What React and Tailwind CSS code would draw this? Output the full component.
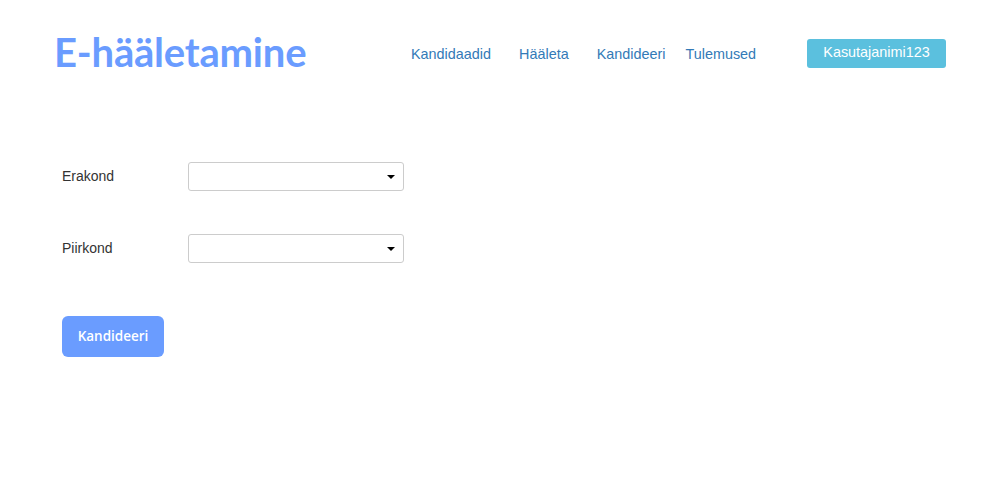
import React from 'react';

const navLinks = ['Kandidaadid', 'Hääleta', 'Kandideeri', 'Tulemused'];

const Caret = () => (
  <svg width="8" height="4" viewBox="0 0 8 4" className="absolute right-[9px] top-1/2 -translate-y-1/2 pointer-events-none">
    <path d="M0 0h8L4 4z" fill="#000" />
  </svg>
);

const SelectRow = ({ label }) => (
  <div className="flex items-center h-[29px]">
    <label className="w-[126px] text-[14px] text-[#333]">{label}</label>
    <div className="relative w-[216px] h-[29px]">
      <select className="w-full h-full appearance-none rounded-[3px] border border-[#ccc] bg-white px-2 text-[14px] outline-none">
        <option value=""></option>
      </select>
      <Caret />
    </div>
  </div>
);

export default function App() {
  return (
    <div className="w-[998px] h-[493px] bg-white font-['Liberation_Sans',Arial,sans-serif]">
      {/* header */}
      <div className="flex items-center h-[106px] pl-[54px] pr-[52px]">
        <h1 className="font-['Lato',sans-serif] font-bold text-[40px] text-[#6a9cff] tracking-[-0.2px] w-[357px] -mt-[2px]">
          E-hääletamine
        </h1>
        <nav className="flex items-center text-[14.4px] text-[#337ab7] pt-[4px]">
          <a href="#" className="mr-[28px]">{navLinks[0]}</a>
          <a href="#" className="mr-[28px]">{navLinks[1]}</a>
          <a href="#" className="mr-[20px]">{navLinks[2]}</a>
          <a href="#">{navLinks[3]}</a>
        </nav>
        <button className="ml-auto w-[139px] h-[29px] rounded-[3px] bg-[#5bc0de] text-white text-[14.4px]">
          Kasutajanimi123
        </button>
      </div>

      {/* form */}
      <div className="pl-[62px] pt-[56px] flex flex-col">
        <SelectRow label="Erakond" />
        <div className="h-[43px]" />
        <SelectRow label="Piirkond" />
        <div className="h-[53px]" />
        <button className="w-[102px] h-[41px] rounded-[6px] bg-[#6a9cff] text-white text-[13.5px] font-['Open_Sans',sans-serif] font-semibold">
          Kandideeri
        </button>
      </div>
    </div>
  );
}
